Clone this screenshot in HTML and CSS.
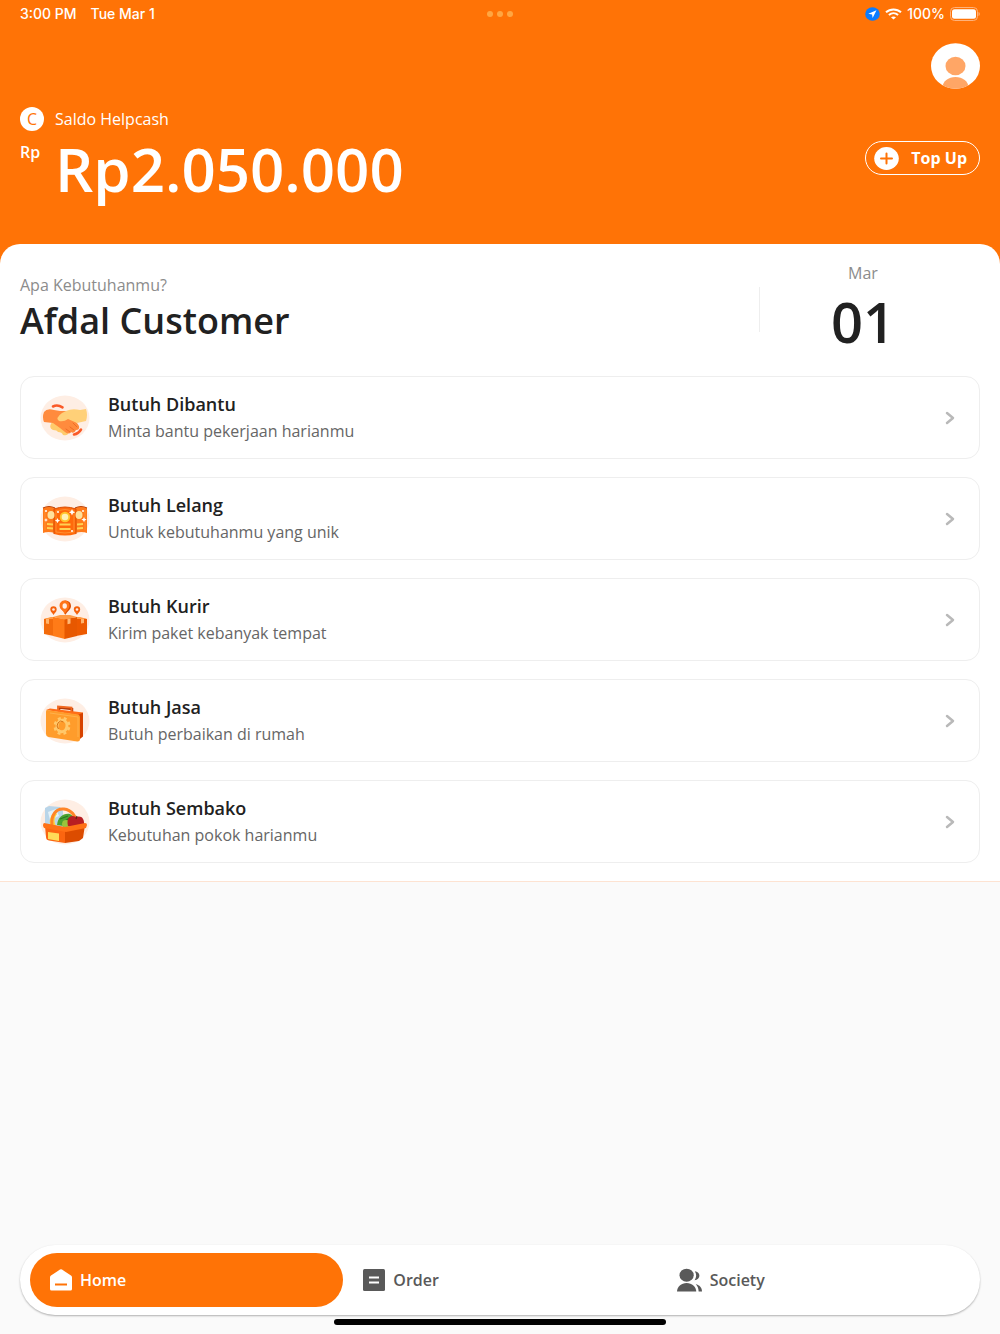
FILE: index.html
```html
<!DOCTYPE html>
<html lang="id">
<head>
    <meta charset="UTF-8">
    <meta name="viewport" content="width=device-width, initial-scale=1.0">
    <title>Helpcash</title>

    <link rel="stylesheet" href="styles.css">
</head>

<body>

<header class="header">
    <div class="status-bar">
        <div class="status-left">
            <span>3:00 PM</span>
            <span>Tue Mar 1</span>
        </div>
        <div class="status-dots"><i></i><i></i><i></i></div>
        <div class="status-right">
            <svg width="15" height="14" viewBox="0 0 15 14">
                <ellipse cx="7.5" cy="7" rx="7.3" ry="6.8" fill="#0a7cff"/>
                <path d="M11.5 3.3 3.3 6.8l3.8.6.5 3.6z" fill="#fff"/>
            </svg>
            <svg width="17" height="12" viewBox="0 0 17 12" fill="none" stroke="#fff" stroke-width="2">
                <path d="M1 4.3C5.2.4 11.8.4 16 4.3"/>
                <path d="M3.9 7.1c2.7-2.4 6.5-2.4 9.2 0"/>
                <path d="M8.5 11.6 6 9.3c1.5-1.2 3.5-1.2 5 0z" fill="#fff" stroke="none"/>
            </svg>
            <span>100%</span>
            <svg width="30" height="14" viewBox="0 0 30 14">
                <rect x=".5" y=".5" width="27" height="13" rx="4" fill="none" stroke="#ffb27a"/>
                <rect x="2" y="2.3" width="24" height="9.4" rx="2.5" fill="#fff"/>
                <path d="M28.5 5c1.7.6 1.7 3.4 0 4z" fill="#ffb27a"/>
            </svg>
        </div>
    </div>

    <div class="profile">
        <button type="button" class="avatar" aria-label="Profile">
            <svg width="49" height="46" viewBox="0 0 49 46">
                <defs>
                    <clipPath id="avatar-clip"><ellipse cx="24.5" cy="23" rx="24.5" ry="22.7"/></clipPath>
                </defs>
                <g clip-path="url(#avatar-clip)">
                    <rect width="49" height="46" fill="#fff"/>
                    <ellipse cx="24.5" cy="23" rx="10" ry="9.3" fill="#ffa666"/>
                    <ellipse cx="24.5" cy="44.5" rx="13" ry="10.500" fill="#ffa666"/>
                </g>
            </svg>
        </button>
    </div>

    <div class="saldo-label">
        <span class="coin">C</span>
        <span>Saldo Helpcash</span>
    </div>

    <div class="saldo">
        <span class="currency">Rp</span>
        <strong class="amount">Rp2.050.000</strong>
        <button type="button" class="topup">
            <svg width="25" height="23" viewBox="0 0 25 23">
                <ellipse cx="12.5" cy="11.5" rx="12.3" ry="11.4" fill="#fff"/>
                <path d="M12.5 6.5v10M7 11.5h11" stroke="#ff7306" stroke-width="2" stroke-linecap="round"/>
            </svg>
            <span>Top Up</span>
        </button>
    </div>
</header>

<main class="main">
    <section class="panel">
        <div class="greeting">
            <div class="greeting-text">
                <p>Apa Kebutuhanmu?</p>
                <h1>Afdal Customer</h1>
            </div>
            <div class="divider"></div>
            <div class="date">
                <span class="month">Mar</span>
                <span class="day">01</span>
            </div>
        </div>

        <nav class="services" aria-label="Layanan">
            <a href="#" class="card">
                <!-- handshake -->
                <svg class="card-icon" viewBox="0 0 50 46">
                    <ellipse cx="25" cy="23" rx="24.5" ry="22.5" fill="#feeee4"/>
                    <path d="M13 11.5c3-1.5 6.5-1 9.5.8" fill="none" stroke="#fa5a28" stroke-width="2.6" stroke-linecap="round"/>
                    <path d="M34 39.5c3-.5 5.5-2.5 7-5" fill="none" stroke="#fa5a28" stroke-width="2.6" stroke-linecap="round"/>
                    <path d="M12 27q-4 6 1 8 4 0 5 2 4 0 5 3 5 1 5-2l4-4-10-8z" fill="#ffcb6b"/>
                    <path d="M4 17q3-4 10-2l6 1h8l2 6q7 5 9 9 1 4-3 4-2 4-5 2-2 3-6 0l-5-4-7-5-9-1q-2-5 0-10z" fill="#ff8b3d"/>
                    <path d="M26 16q6-3 14-1l6-1q2 6 0 12l-9 2-9-4q-4 3-9 2-4-3 3-8z" fill="#ffd078"/>
                    <path d="M30 32l4 3M33 28l4 4M26 34l4 3" stroke="#ee6c25" stroke-linecap="round"/>
                </svg>
                <div class="card-text">
                    <h2>Butuh Dibantu</h2>
                    <p>Minta bantu pekerjaan harianmu</p>
                </div>
                <svg class="chevron" viewBox="0 0 10 14"><path d="M2 2l6 5-6 5"/></svg>
            </a>

            <a href="#" class="card">
                <!-- banknotes -->
                <svg class="card-icon" viewBox="0 0 50 46">
                    <ellipse cx="25" cy="23" rx="24.5" ry="22.5" fill="#feeee4"/>
                    <path d="M3 12q6-3 12 0v25q-7-2-12 0z" fill="#ff7a1a"/>
                    <path d="M35 12q6-3 12 0v25q-5-2-12 0z" fill="#ff7a1a"/>
                    <path d="M3 12q6-3 12 0M35 12q6-3 12 0" fill="none" stroke="#b94208" stroke-width="1.2"/>
                    <path d="M14 13q11-4 22 0v25q-11 3-22 0z" fill="#ff690b"/>
                    <path d="M36 38V13q-11-4-22 0v25" fill="none" stroke="#d94e02"/>
                    <path d="M16 15q9-3 18 0v21q-9 2-18 0zM5 14v20M45 14v20" fill="none" stroke="#ff9838" stroke-width=".8"/>
                    <ellipse cx="11" cy="19" rx="3.5" ry="4" fill="#ffe09c"/>
                    <ellipse cx="39" cy="19" rx="3.5" ry="4" fill="#ffe09c"/>
                    <circle cx="25" cy="21" r="5.2" fill="#ffc52d"/>
                    <circle cx="25" cy="21" r="3.3" fill="#fff1b5"/>
                    <path d="M19.5 28.5h11M19.5 33h11M7 28l6 .5M7 32l6 .5M37 28.5l6-.5M37 32.5l6-.5" stroke="#ffd253" stroke-width="2"/>
                    <path d="M32 13l1 2.2 2.2 1-2.2 1-1 2.2-1-2.2-2.2-1 2.2-1zM17.5 22l.8 1.8 1.8.8-1.8.8-.8 1.8-.8-1.8-1.8-.8 1.8-.8zM44 21l.8 1.8 1.8.8-1.8.8-.8 1.8-.8-1.8-1.8-.8 1.8-.8zM6 22l.6 1.4 1.4.6-1.4.6-.6 1.4-.6-1.4-1.4-.6 1.4-.6z" fill="#fff"/>
                    <circle cx="6" cy="15" r="1" fill="#fff"/><circle cx="18" cy="16" r="1" fill="#fff"/><circle cx="32" cy="35" r="1" fill="#fff"/><circle cx="43" cy="15" r="1" fill="#fff"/>
                </svg>
                <div class="card-text">
                    <h2>Butuh Lelang</h2>
                    <p>Untuk kebutuhanmu yang unik</p>
                </div>
                <svg class="chevron" viewBox="0 0 10 14"><path d="M2 2l6 5-6 5"/></svg>
            </a>

            <a href="#" class="card">
                <!-- parcels with map pins -->
                <svg class="card-icon" viewBox="0 0 50 46">
                    <ellipse cx="25" cy="23" rx="24.5" ry="22.5" fill="#feeee4"/>
                    <path d="M4 22l10-2v19l-10-2z" fill="#f36b0b"/>
                    <path d="M47 22l-11-2v19l11-2z" fill="#ed5a00"/>
                    <path d="M4 22l7-2h4v2zM47 22l-7-2h-4v2z" fill="#ff9a43"/>
                    <path d="M6 22h3v5l-3-.5zM41 22h3v4l-3 .5z" fill="#ffb36b"/>
                    <path d="M13 20l12 2v20l-12-3z" fill="#ff7b17"/>
                    <path d="M24.5 22L37 20v19l-12.5 3z" fill="#e75800"/>
                    <path d="M13 20l7-2h10l7 2-12.5 2.5z" fill="#ff9b45"/>
                    <path d="M27.5 22l3-.5v5l-3 .8z" fill="#ffb875"/>
                    <path d="M25.5 18c-1-5-5.5-5-5.5-9a5.5 5.5 0 0 1 11 0c0 4-4 5-5.5 9z" fill="#d94b00"/>
                    <path d="M24.5 17.5c-1-5-5-5-5-9a5 5 0 0 1 10 0c0 4-3.5 5-5 9z" fill="#ff7519"/>
                    <ellipse cx="24.7" cy="9" rx="2.2" ry="2.8" fill="#feeee4"/>
                    <path d="M13.5 18c-.5-2-3.2-3-3.2-5.5a3.2 3.2 0 0 1 6.4 0c0 2.500-2.500 3.500-3.200 5.500zM37 18c-.5-2-3.2-3-3.2-5.5a3.2 3.2 0 0 1 6.4 0c0 2.500-2.500 3.500-3.200 5.500z" fill="#f5610b"/>
                    <circle cx="13.5" cy="12.5" r="1.3" fill="#feeee4"/><circle cx="37" cy="12.5" r="1.3" fill="#feeee4"/>
                </svg>
                <div class="card-text">
                    <h2>Butuh Kurir</h2>
                    <p>Kirim paket kebanyak tempat</p>
                </div>
                <svg class="chevron" viewBox="0 0 10 14"><path d="M2 2l6 5-6 5"/></svg>
            </a>

            <a href="#" class="card">
                <!-- tool case -->
                <svg class="card-icon" viewBox="0 0 50 46">
                    <ellipse cx="25" cy="23" rx="24.5" ry="22.5" fill="#feeee4"/>
                    <path d="M19 13V9.5l13 1.5v4" fill="none" stroke="#b53b08" stroke-width="2.5"/>
                    <path d="M18 12V8.5l13.5 1v4" fill="none" stroke="#f26a22" stroke-width="1.8"/>
                    <path d="M6 12l4-1.5 33 4-3 3z" fill="#ff6e17"/>
                    <path d="M38 17l5-2.5v24l-5 4z" fill="#d74300"/>
                    <path d="M7 12l31 4.5q2 .5 2 2.5v22q0 3-3 2.5L8.500 39q-2.500-.5-2.500-3V14q0-2 1-2z" fill="#ff9c2b"/>
                    <path d="M10 15l28 4v20" fill="none" stroke="#ffb14b"/>
                    <g transform="rotate(10 22 28)" stroke="#ffc96c" fill="none">
                        <ellipse cx="22" cy="28" rx="5" ry="5.8" stroke-width="3"/>
                        <ellipse cx="22" cy="28" rx="7.2" ry="8" stroke-width="2.4" stroke-dasharray="3 3"/>
                    </g>
                    <path d="M18.5 31a4 4.5 0 0 1 5-7" fill="none" stroke="#d86e10"/>
                </svg>
                <div class="card-text">
                    <h2>Butuh Jasa</h2>
                    <p>Butuh perbaikan di rumah</p>
                </div>
                <svg class="chevron" viewBox="0 0 10 14"><path d="M2 2l6 5-6 5"/></svg>
            </a>

            <a href="#" class="card">
                <!-- grocery basket -->
                <svg class="card-icon" viewBox="0 0 50 46">
                    <ellipse cx="25" cy="23" rx="24.5" ry="22.5" fill="#feeee4"/>
                    <path d="M5 9l4-2 11 1 3 4v16H5z" fill="#b9d5e9"/>
                    <path d="M8 13l8-3 3 7-9 4z" fill="#e4f1f8"/>
                    <path d="M11 27c-3-4 0-12 4-14l2 2c-3 4-3 8-1 12z" fill="#ffd23e"/>
                    <path d="M17 26c1-8 6-12 13-11l6 4-6 9z" fill="#4da331"/>
                    <path d="M20 20l8-3M22 24l9-6" stroke="#287b23" stroke-width="1.2"/>
                    <circle cx="26" cy="25" r="4" fill="#9bc43c"/>
                    <path d="M12 26c-1-10 4-17 12-16s12 8 13 16" fill="none" stroke="#ff8527" stroke-width="3"/>
                    <path d="M28 27c-2-9 3-12 8-9 5-2 9 1 8 9z" fill="#b81e22"/>
                    <path d="M36 20l1-3" stroke="#5c2612" stroke-width="1.2"/>
                    <path d="M5 27l20 3v14L9 41.5Q6 41 6 38z" fill="#fb6510"/>
                    <path d="M25 30l20-4-2 13-4 3-14 2z" fill="#dc4c00"/>
                    <path d="M4 24l21 4 20-4q2 0 2 2l-1 3-20 4-22-4q-2-3 0-5z" fill="#ff7115"/>
                    <path d="M8 33l11 1.5V42L8 40z" fill="#ffdc58"/>
                </svg>
                <div class="card-text">
                    <h2>Butuh Sembako</h2>
                    <p>Kebutuhan pokok harianmu</p>
                </div>
                <svg class="chevron" viewBox="0 0 10 14"><path d="M2 2l6 5-6 5"/></svg>
            </a>
        </nav>
    </section>
</main>

<footer class="footer">
    <nav class="tabs">
        <a href="#" class="tab active">
            <svg width="22" height="22" viewBox="0 0 22 22">
                <path d="M0 8.5Q0 7.3 1 6.6L10 .6q1-.7 2 0l9 6q1 .7 1 1.9V20q0 1.500-1.500 1.500h-19Q0 21.500 0 20z" fill="#fff"/>
                <path d="M5 15.5h12" stroke="#ff7306" stroke-width="2"/>
            </svg>
            <span>Home</span>
        </a>
        <a href="#" class="tab">
            <svg width="22" height="22" viewBox="0 0 22 22">
                <rect width="22" height="22" rx="1.5" fill="#595959"/>
                <path d="M6 8.5h10M6 13.5h10" stroke="#fff" stroke-width="2"/>
            </svg>
            <span>Order</span>
        </a>
        <a href="#" class="tab">
            <svg width="25" height="24" viewBox="0 0 26 24" fill="#595959">
                <ellipse cx="10" cy="7" rx="7.4" ry="6.8"/>
                <path d="M0 24c0-5 4.5-9 10-9s10 4 10 9z"/>
                <path d="M18.500 3c3 .3 4.800 2.300 4.800 4.600s-2 4.400-5 4.700c2-3 2.300-6.300.2-9.300zM19.500 16.500c4 .8 6.500 3.500 6.500 7.500h-3.500c0-3-1-5.500-3-7.500z"/>
            </svg>
            <span>Society</span>
        </a>
    </nav>
    <div class="home-indicator"></div>
</footer>

</body>
</html>
```
FILE: styles.css
```css
* {
    box-sizing: border-box;
}

body {
    display: flex;
    flex-direction: column;
    min-height: 100vh;
    margin: 0;
    background-color: #fafafa;
    color: #212121;
    font-family: "Open Sans", "Noto Sans", sans-serif;
    font-size: 16px;
    line-height: 24px;
}

h1, h2, p {
    margin: 0;
}

a {
    color: inherit;
    text-decoration: none;
}

button {
    font: inherit;
    color: inherit;
    cursor: pointer;
}

svg {
    display: block;
    flex-shrink: 0;
}

/* Orange header with the balance */
.header {
    padding: 0 20px 45px;
    background-color: #ff7306;
    color: white;
}

.status-bar {
    display: grid;
    grid-template-columns: 1fr auto 1fr;
    align-items: center;
    height: 28px;
    font-family: Inter, sans-serif;
    font-size: 14px;
    font-weight: 500;
}

.status-left {
    display: flex;
    gap: 14px;
}

.status-dots {
    display: flex;
    gap: 4px;
}

.status-dots i {
    width: 6px;
    height: 6px;
    border-radius: 50%;
    background-color: #ffa642;
}

.status-right {
    display: flex;
    justify-content: flex-end;
    align-items: center;
    gap: 5px;
}

.profile {
    display: flex;
    justify-content: flex-end;
    padding-top: 15px;
}

.avatar {
    padding: 0;
    border: none;
    background: none;
}

.saldo-label {
    display: flex;
    align-items: center;
    gap: 11px;
    margin-top: 18px;
}

.coin {
    width: 24px;
    height: 24px;
    border-radius: 50%;
    background-color: white;
    color: #ff7306;
    text-align: center;
}

.saldo {
    display: flex;
    align-items: flex-start;
    margin-top: 9px;
}

.currency {
    width: 35px;
    font-weight: 600;
}

.amount {
    font-size: 60px;
    font-weight: 600;
    line-height: 59px;
}

.topup {
    display: flex;
    align-items: center;
    gap: 12px;
    height: 34px;
    margin-top: 1px;
    margin-left: auto;
    padding: 0 12px 0 8px;
    border: 1px solid white;
    border-radius: 17px;
    background: none;
    font-weight: 700;
}

/* White panel, the orange behind it shows at the rounded corners */
.main {
    background: linear-gradient(#ff7306 40px, transparent 40px);
}

.panel {
    padding: 15px 20px 18px;
    border-bottom: 1px solid #fde3d2;
    border-radius: 20px 20px 0 0;
    background-color: white;
}

.greeting {
    display: flex;
    align-items: center;
    height: 100px;
}

.greeting-text {
    flex: 1;
}

.greeting-text p,
.month {
    color: #8c8c8c;
}

.greeting-text h1 {
    font-size: 36px;
    font-weight: 600;
    line-height: 48px;
}

.divider {
    width: 1px;
    height: 45px;
    background-color: #eeeeee;
}

.date {
    display: flex;
    flex-direction: column;
    align-items: center;
    width: 220px;
    padding-right: 14px;
}

.day {
    font-size: 56px;
    font-weight: 600;
    line-height: 72px;
}

.services {
    display: flex;
    flex-direction: column;
    gap: 18px;
    margin-top: 17px;
}

.card {
    display: flex;
    align-items: center;
    height: 83px;
    padding: 0 24px 0 19px;
    border: 1px solid #eeeeee;
    border-radius: 14px;
}

.card-icon {
    width: 50px;
    height: 46px;
}

.card-text {
    flex: 1;
    padding-left: 18px;
}

.card-text h2 {
    font-size: 18px;
    font-weight: 600;
    line-height: 27px;
}

.card-text p {
    color: #666666;
    line-height: 27px;
}

.chevron {
    width: 10px;
    height: 14px;
    fill: none;
    stroke: #b9b9b9;
    stroke-width: 2.5;
    stroke-linecap: round;
    stroke-linejoin: round;
}

/* Bottom tab bar */
.footer {
    margin-top: auto;
    padding: 20px 20px 9px;
}

.tabs {
    display: grid;
    grid-template-columns: repeat(3, 1fr);
    padding: 8px 10px;
    border-radius: 36px;
    background-color: white;
    box-shadow: 0 1px 2px rgba(0, 0, 0, 0.3);
}

.tab {
    display: flex;
    align-items: center;
    gap: 8px;
    height: 54px;
    padding-left: 20px;
    border-radius: 27px;
    color: #595959;
    font-weight: 600;
}

.tab.active {
    background-color: #ff7306;
    color: white;
}

.home-indicator {
    width: 34.6%;
    height: 6px;
    margin: 4px auto 0;
    border-radius: 3px;
    background-color: black;
}
```
